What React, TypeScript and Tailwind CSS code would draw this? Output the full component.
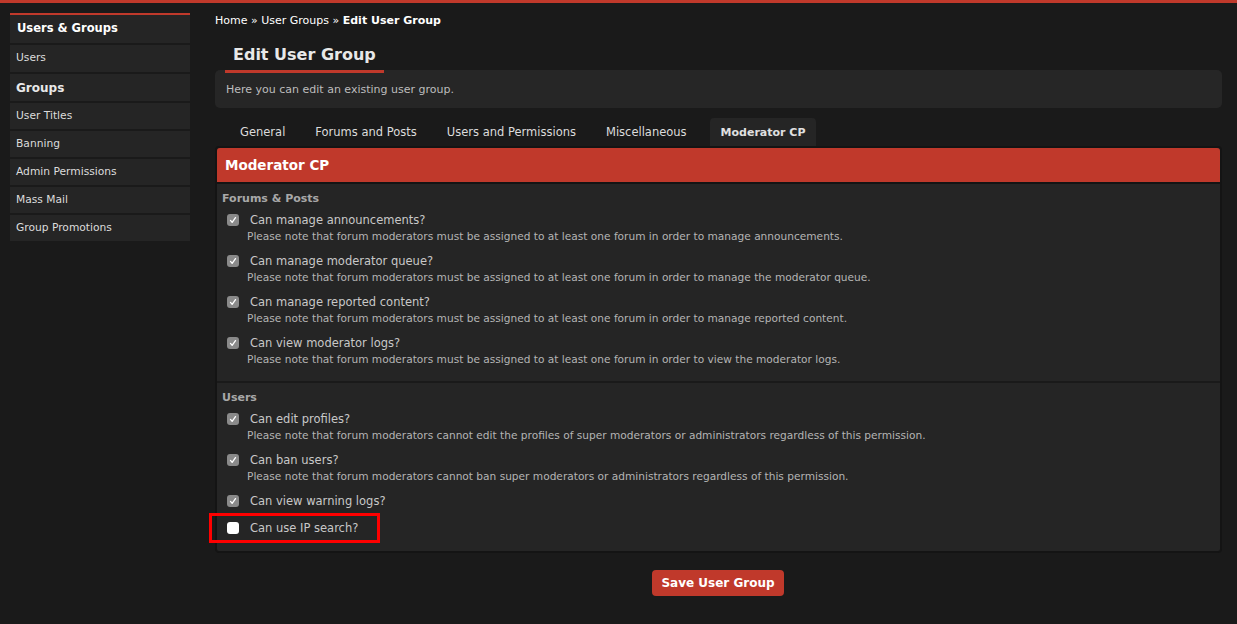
import React from 'react'

const sideItems = [
  { label: 'Users & Groups', cls: 'h-[30px] pl-[7px] text-[11.5px] font-bold text-white' },
  { label: 'Users', cls: 'h-[29px] pl-[6px] text-[10.7px] text-[#dcdcdc]' },
  { label: 'Groups', cls: 'h-[29px] pl-[6px] text-[12px] font-bold text-[#e8e8e8]' },
  { label: 'User Titles', cls: 'h-[28px] pl-[6px] text-[10.7px] text-[#dcdcdc]' },
  { label: 'Banning', cls: 'h-[28px] pl-[6px] text-[10.7px] text-[#dcdcdc]' },
  { label: 'Admin Permissions', cls: 'h-[28px] pl-[6px] text-[10.7px] text-[#dcdcdc]' },
  { label: 'Mass Mail', cls: 'h-[28px] pl-[6px] text-[10.7px] text-[#dcdcdc]' },
  { label: 'Group Promotions', cls: 'h-[28px] pl-[6px] text-[10.7px] text-[#dcdcdc]' },
]

const tabs = ['General', 'Forums and Posts', 'Users and Permissions', 'Miscellaneous', 'Moderator CP']

type Perm = { label: string; note?: string; checked: boolean; highlight?: boolean }

const forumPerms: Perm[] = [
  {
    label: 'Can manage announcements?',
    note: 'Please note that forum moderators must be assigned to at least one forum in order to manage announcements.',
    checked: true,
  },
  {
    label: 'Can manage moderator queue?',
    note: 'Please note that forum moderators must be assigned to at least one forum in order to manage the moderator queue.',
    checked: true,
  },
  {
    label: 'Can manage reported content?',
    note: 'Please note that forum moderators must be assigned to at least one forum in order to manage reported content.',
    checked: true,
  },
  {
    label: 'Can view moderator logs?',
    note: 'Please note that forum moderators must be assigned to at least one forum in order to view the moderator logs.',
    checked: true,
  },
]

const userPerms: Perm[] = [
  {
    label: 'Can edit profiles?',
    note: 'Please note that forum moderators cannot edit the profiles of super moderators or administrators regardless of this permission.',
    checked: true,
  },
  {
    label: 'Can ban users?',
    note: 'Please note that forum moderators cannot ban super moderators or administrators regardless of this permission.',
    checked: true,
  },
  { label: 'Can view warning logs?', checked: true },
  { label: 'Can use IP search?', checked: false, highlight: true },
]

function Checkbox({ checked }: { checked: boolean }) {
  return (
    <span
      className={`flex h-[12px] w-[12px] shrink-0 items-center justify-center rounded-[3px] ${
        checked ? 'bg-[#8a8a8a]' : 'bg-white'
      }`}
    >
      {checked && (
        <svg viewBox="0 0 12 12" className="h-[10px] w-[10px]">
          <path d="M3 6.5 L5 8.8 L9 3.2" fill="none" stroke="#fff" strokeWidth="1.6" strokeLinecap="round" strokeLinejoin="round" />
        </svg>
      )}
    </span>
  )
}

function PermRow({ perm }: { perm: Perm }) {
  return (
    <div className={`relative ${perm.note ? 'h-[41px]' : 'h-[27px]'}`}>
      {/* red annotation box drawn over the row */}
      {perm.highlight && (
        <div className="absolute -left-[18px] -top-[8px] h-[30px] w-[171px] border-[3px] border-[#ff0000]" />
      )}
      <div className="flex items-center gap-[11px]">
        <Checkbox checked={perm.checked} />
        <span className="text-[11.5px] leading-[14px] text-[#c8c8c8]">{perm.label}</span>
      </div>
      {perm.note && (
        <div className="ml-[20px] mt-[3px] text-[10.6px] leading-[13px] text-[#b4b4b4]">{perm.note}</div>
      )}
    </div>
  )
}

function Section({ title, perms, last }: { title: string; perms: Perm[]; last?: boolean }) {
  return (
    <div className={`px-[5px] pt-[7px] ${last ? 'pb-[3px]' : 'border-b-2 border-[#1a1a1a] pb-[4px]'}`}>
      <div className="mb-[7px] text-[11px] font-bold leading-[15px] text-[#a8a8a8]">{title}</div>
      <div className="pl-[5px]">
        {perms.map(p => (
          <PermRow key={p.label} perm={p} />
        ))}
      </div>
    </div>
  )
}

export default function App() {
  return (
    <div
      className="min-h-[624px] bg-[#1a1a1a] text-white"
      style={{ fontFamily: '"DejaVu Sans", Verdana, sans-serif' }}
    >
      <div className="h-[3px] bg-[#c0392b]" />
      <div className="flex gap-[25px] pl-[10px] pr-[15px] pt-[10px]">
        {/* Sidebar */}
        <div className="w-[180px] shrink-0">
          <div className="h-[2px] bg-[#c0392b]" />
          {sideItems.map(item => (
            <div
              key={item.label}
              className={`flex items-center border-b-[2px] border-[#1a1a1a] bg-[#252525] ${item.cls}`}
            >
              {item.label}
            </div>
          ))}
        </div>

        {/* Main */}
        <div className="flex-1">
          <div className="mt-[1px] h-[14px] text-[11px] leading-[14px] text-white">
            Home » User Groups » <span className="font-bold">Edit User Group</span>
          </div>

          <div className="relative z-10 ml-[10px] mt-[17px] w-fit border-b-[3px] border-[#c0392b] pb-[5px] pl-[8px] pr-[8px] text-[16px] font-bold leading-[20px] text-[#e8e8e8]">
            Edit User Group
          </div>

          <div className="-mt-[3px] flex h-[38px] items-center rounded-[5px] bg-[#262626] pl-[11px] pt-[3px] text-[11px] text-[#bdbdbd]">
            Here you can edit an existing user group.
          </div>

          {/* Tabs */}
          <div className="mt-[10px] flex h-[28px] items-end pl-[10px]">
            {tabs.map(t => (
              <div
                key={t}
                className={`flex h-[28px] items-center rounded-t-[4px] pt-[2px] text-[11.5px] ${
                  t === 'Moderator CP'
                    ? 'ml-[8px] bg-[#252525] px-[11px] text-[11px] font-bold text-[#e0e0e0]'
                    : 'px-[15px] text-[#dcdcdc]'
                }`}
              >
                {t}
              </div>
            ))}
          </div>

          {/* Panel */}
          <div className="w-[1007px] rounded-[4px] border-2 border-[#141414] bg-[#252525]">
            <div className="flex h-[36px] items-center rounded-t-[3px] border-b-2 border-[#141414] bg-[#c0392b] pl-[8px] text-[13.5px] font-bold text-white">
              Moderator CP
            </div>
            <Section title="Forums & Posts" perms={forumPerms} />
            <Section title="Users" perms={userPerms} last />
          </div>

          <div className="mt-[17px] flex justify-center pr-[1px]">
            <button className="h-[26px] rounded-[4px] bg-[#c0392b] px-[9px] text-[12px] font-bold text-white">
              Save User Group
            </button>
          </div>
        </div>
      </div>
    </div>
  )
}
